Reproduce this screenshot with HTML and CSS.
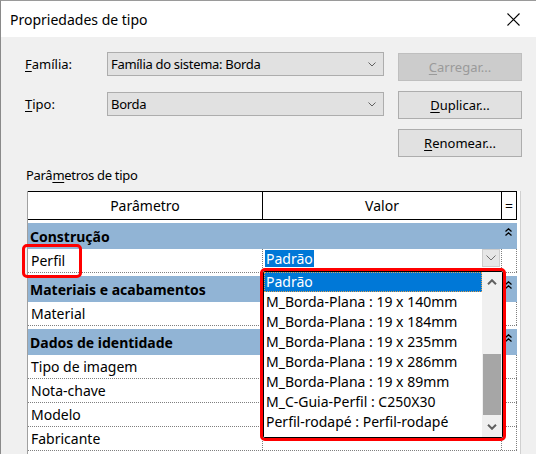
FILE: index.html
```html
<!DOCTYPE html>
<html lang="pt">
<head>
<meta charset="utf-8">
<title>Propriedades de tipo</title>
<link rel="stylesheet" href="styles.css">
</head>
<body>
<div class="dialog">
  <div class="titlebar">
    <span class="title">Propriedades de tipo</span>
    <svg class="close" width="13" height="13" viewBox="0 0 13 13"><path d="M0.5 0.5 L12.5 12.5 M12.5 0.5 L0.5 12.5" stroke="#000" stroke-width="1.1" fill="none"/></svg>
  </div>
  <div class="content">
    <div class="form">
      <div class="fields">
        <div class="field">
          <span class="label"><u>F</u>amília:</span>
          <div class="combo"><span>Família do sistema: Borda</span><svg width="8" height="5" viewBox="0 0 8 5"><path d="M0.5 0.5 L4 4 L7.5 0.5" stroke="#606060" fill="none"/></svg></div>
        </div>
        <div class="field">
          <span class="label"><u>T</u>ipo:</span>
          <div class="combo"><span>Borda</span><svg width="8" height="5" viewBox="0 0 8 5"><path d="M0.5 0.5 L4 4 L7.5 0.5" stroke="#606060" fill="none"/></svg></div>
        </div>
      </div>
      <div class="buttons">
        <div class="btn disabled"><u>C</u>arregar...</div>
        <div class="btn"><u>D</u>uplicar...</div>
        <div class="btn"><u>R</u>enomear...</div>
      </div>
    </div>
    <div class="section-label">Parâ<u>m</u>etros de tipo</div>
    <div class="table">
      <div class="thead">
        <div class="th c-name">Parâmetro</div>
        <div class="th c-val">Valor</div>
        <div class="th c-eq">=</div>
      </div>
      <div class="group"><span class="gname">Construção</span><span class="collapse"><svg width="7" height="8" viewBox="0 0 7 8"><path d="M0.5 3.5 L3.5 0.8 L6.5 3.5 M0.5 7.5 L3.5 4.8 L6.5 7.5" stroke="#000" stroke-width="1.3" fill="none"/></svg></span></div>
      <div class="row">
        <div class="cell c-name">Perfil</div>
        <div class="cell c-val editing"><span class="sel">Padrão</span><span class="dd-btn"><svg width="10" height="6" viewBox="0 0 10 6"><path d="M0.5 0.5 L5 5 L9.5 0.5" stroke="#707070" fill="none"/></svg></span></div>
        <div class="cell c-eq"></div>
      </div>
      <div class="group"><span class="gname">Materiais e acabamentos</span><span class="collapse"><svg width="7" height="8" viewBox="0 0 7 8"><path d="M0.5 3.5 L3.5 0.8 L6.5 3.5 M0.5 7.5 L3.5 4.8 L6.5 7.5" stroke="#000" stroke-width="1.3" fill="none"/></svg></span></div>
      <div class="row">
        <div class="cell c-name">Material</div>
        <div class="cell c-val"></div>
        <div class="cell c-eq"></div>
      </div>
      <div class="group"><span class="gname">Dados de identidade</span><span class="collapse"><svg width="7" height="8" viewBox="0 0 7 8"><path d="M0.5 3.5 L3.5 0.8 L6.5 3.5 M0.5 7.5 L3.5 4.8 L6.5 7.5" stroke="#000" stroke-width="1.3" fill="none"/></svg></span></div>
      <div class="row">
        <div class="cell c-name">Tipo de imagem</div>
        <div class="cell c-val"></div>
        <div class="cell c-eq"></div>
      </div>
      <div class="row">
        <div class="cell c-name">Nota-chave</div>
        <div class="cell c-val"></div>
        <div class="cell c-eq"></div>
      </div>
      <div class="row">
        <div class="cell c-name">Modelo</div>
        <div class="cell c-val"></div>
        <div class="cell c-eq"></div>
      </div>
      <div class="row">
        <div class="cell c-name">Fabricante</div>
        <div class="cell c-val"></div>
        <div class="cell c-eq"></div>
      </div>
    </div>
  </div>

  <div class="mark mark-perfil"></div>

  <div class="dropdown">
    <div class="listbox">
      <div class="items">
        <div class="item selected">Padrão</div>
        <div class="item">M_Borda-Plana : 19 x 140mm</div>
        <div class="item">M_Borda-Plana : 19 x 184mm</div>
        <div class="item">M_Borda-Plana : 19 x 235mm</div>
        <div class="item">M_Borda-Plana : 19 x 286mm</div>
        <div class="item">M_Borda-Plana : 19 x 89mm</div>
        <div class="item">M_C-Guia-Perfil : C250X30</div>
        <div class="item">Perfil-rodapé : Perfil-rodapé</div>
      </div>
      <div class="vscroll">
        <div class="arrow"><svg width="10" height="6" viewBox="0 0 10 6"><path d="M1 5.2 L5 1.2 L9 5.2" stroke="#606060" stroke-width="2" fill="none"/></svg></div>
        <div class="track"><div class="thumb"></div></div>
        <div class="arrow"><svg width="10" height="6" viewBox="0 0 10 6"><path d="M1 0.8 L5 4.8 L9 0.8" stroke="#606060" stroke-width="2" fill="none"/></svg></div>
      </div>
    </div>
  </div>
</div>
</body>
</html>
```
FILE: styles.css
```css
* { box-sizing: border-box; }
html, body {
  margin: 0;
  padding: 0;
  width: 536px;
  height: 454px;
  overflow: hidden;
  background: #f0f0f0;
}
body {
  font-family: "Noto Sans", "Segoe UI", sans-serif;
  font-size: 14px;
  color: #000;
}
u { text-decoration: underline; text-underline-offset: 2px; text-decoration-thickness: 1px; }

.dialog {
  position: relative;
  width: 536px;
  height: 454px;
  background: #f0f0f0;
  border-left: 1px solid #8a8a8a;
  border-top: 1px solid #9a9a9a;
  display: flex;
  flex-direction: column;
}

.titlebar {
  height: 36px;
  flex: none;
  background: #fff;
  display: flex;
  align-items: center;
  justify-content: space-between;
  padding: 0 16px 0 9px;
}
.title { font-size: 14px; }
.close { display: block; margin-top: 1px; }

.content {
  flex: 1;
  display: flex;
  flex-direction: column;
  min-height: 0;
}

.form {
  display: flex;
  padding: 15px 0 0 24px;
  font-size: 13px;
}
.fields {
  display: flex;
  flex-direction: column;
  gap: 16px;
}
.field {
  display: flex;
  align-items: center;
  height: 24px;
}
.label { width: 82px; }
.combo {
  width: 277px;
  height: 24px;
  background: #e1e1e1;
  border: 1px solid #adadad;
  display: flex;
  align-items: center;
  justify-content: space-between;
  padding: 0 7px 0 3px;
  letter-spacing: -0.3px;
}
.combo svg { display: block; }

.buttons {
  margin: 1px 0 0 14px;
  display: flex;
  flex-direction: column;
  gap: 10px;
}
.btn {
  width: 124px;
  height: 28px;
  background: #e1e1e1;
  border: 1px solid #adadad;
  display: flex;
  align-items: center;
  justify-content: center;
}
.btn.disabled {
  background: #cccccc;
  border-color: #bfbfbf;
  color: #9a9a9a;
}

.section-label {
  margin-top: 8px;
  padding-left: 25px;
  height: 20px;
  line-height: 20px;
  font-size: 13px;
  letter-spacing: -0.3px;
}

.table {
  margin: 6px 0 0 26px;
  width: 494px;
  flex: 1;
  background: #fff;
  border-left: 1px solid #a0a0a0;
  border-right: 1px solid #d0d0d0;
  padding-right: 3px;
  overflow: hidden;
}
.thead {
  display: flex;
  height: 29px;
  border-top: 1px solid #000;
  border-bottom: 1px solid #000;
  background: #fff;
}
.th {
  border-right: 1px solid #000;
  display: flex;
  align-items: center;
  justify-content: center;
}
.c-name { width: 235px; flex: none; }
.c-val { width: 239px; flex: none; }
.c-eq { width: 15px; flex: none; }

.group {
  margin-top: 3px;
  height: 26px;
  background: #91b4d5;
  display: flex;
  align-items: center;
  font-weight: bold;
}
.gname { width: 474px; padding-left: 2px; }
.collapse {
  width: 15px;
  align-self: flex-start;
  padding: 5px 0 0 3px;
}
.collapse svg { display: block; }

.row {
  display: flex;
  height: 24px;
  border-bottom: 1px dotted #7f7f7f;
}
.cell {
  border-right: 1px dotted #7f7f7f;
  display: flex;
  align-items: center;
}
.cell.c-name { padding-left: 3px; }
.editing {
  align-items: flex-start;
  justify-content: space-between;
  padding: 1px 0 0 2px;
}
.sel {
  background: #0078d7;
  color: #fff;
  line-height: 17px;
  padding: 0 1px;
}
.dd-btn {
  width: 18px;
  height: 18px;
  margin: -1px 1px 0 0;
  background: #e6e6e6;
  border: 1px solid #cdcdcd;
  display: flex;
  align-items: center;
  justify-content: center;
}
.dd-btn svg { display: block; }

.mark {
  position: absolute;
  border: 3px solid #ff0000;
  border-radius: 5px;
}
.mark-perfil {
  left: 21px;
  top: 243px;
  width: 60px;
  height: 34px;
}

.dropdown {
  position: absolute;
  left: 259px;
  top: 267px;
  width: 246px;
  height: 173px;
  border: 3px solid #ff0000;
  border-radius: 5px;
  overflow: hidden;
}
.listbox {
  width: 100%;
  height: 100%;
  background: #fff;
  border: 1px solid #000;
  display: flex;
}
.items { flex: 1; }
.item {
  height: 20px;
  line-height: 20px;
  padding-left: 2px;
  white-space: nowrap;
}
.item.selected {
  background: #0078d7;
  color: #fff;
  border: 1px dotted #e0a050;
  line-height: 18px;
  padding-left: 1px;
}
.vscroll {
  width: 20px;
  flex: none;
  background: #f0f0f0;
  display: flex;
  flex-direction: column;
}
.arrow {
  height: 20px;
  display: flex;
  align-items: center;
  justify-content: center;
}
.arrow svg { display: block; }
.track { flex: 1; padding: 62px 1px 0; }
.thumb { height: 61px; background: #a6a6a6; }
```
